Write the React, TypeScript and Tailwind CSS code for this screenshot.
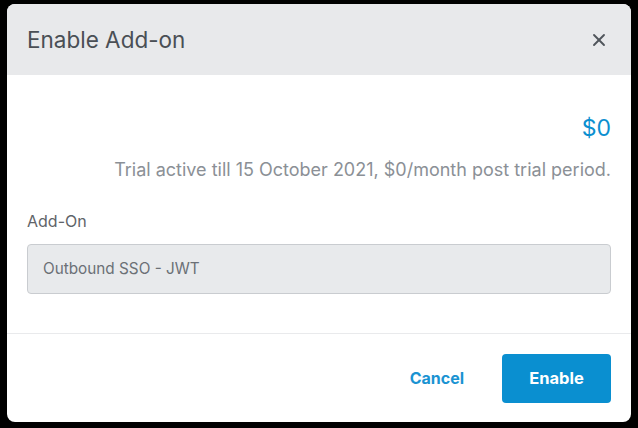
import { X } from 'lucide-react';

export default function App() {
  return (
    <div
      className="h-[428px] w-[638px] bg-black pl-[7px] pt-[4px]"
      style={{ fontFamily: 'Inter, Roboto, "Liberation Sans", sans-serif' }}
    >
      <div className="flex h-[418px] w-[624px] flex-col overflow-hidden rounded-[8px] bg-white">
        <header className="flex h-[71px] shrink-0 items-center justify-between bg-[#e8e9eb] pl-[20px] pr-[22px]">
          <h2 className="text-[22.5px] text-[#4a4f55]">Enable Add-on</h2>
          <X className="h-[20px] w-[20px] text-[#50555b]" strokeWidth={2.25} />
        </header>

        <div className="flex flex-1 flex-col px-[20px] pt-[38px]">
          <div className="text-right text-[23px] leading-[30px] text-[#0b8fd0]">$0</div>
          <p className="mt-[15px] text-right text-[18px] leading-[24px] text-[#8b9096]">
            Trial active till 15 October 2021, $0/month post trial period.
          </p>

          <label className="mt-[28px] text-[16px] leading-[22px] text-[#5f6469]">Add-On</label>
          <div className="mt-[12px] flex h-[50px] items-center rounded-[4px] border border-[#c9ccd0] bg-[#e8eaec] px-[15px] text-[15.3px] text-[#6b7076]">
            Outbound SSO - JWT
          </div>
        </div>

        <footer className="flex h-[89px] shrink-0 items-center justify-end gap-[38px] border-t border-[#e9eaec] pr-[20px]">
          <button className="text-[16px] font-bold text-[#1a93d2]">Cancel</button>
          <button className="h-[49px] w-[109px] rounded-[4px] bg-[#0a8fd0] text-[16.5px] font-bold text-white">
            Enable
          </button>
        </footer>
      </div>
    </div>
  );
}
